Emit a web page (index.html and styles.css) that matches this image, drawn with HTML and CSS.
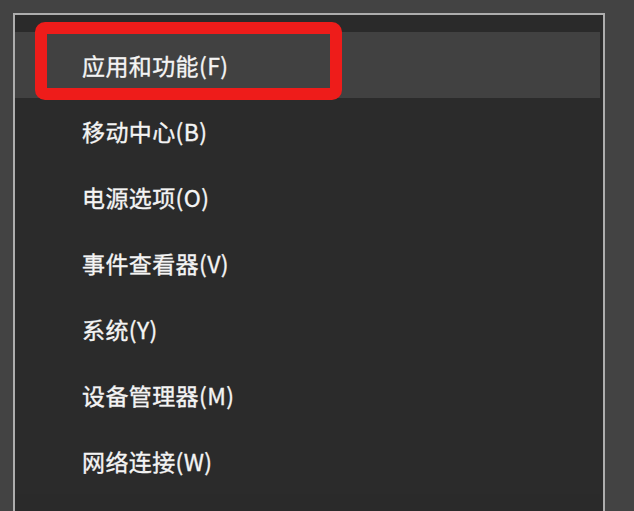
FILE: index.html
```html
<!DOCTYPE html>
<html lang="zh-CN">
<head>
<meta charset="utf-8">
<title>菜单</title>
<link rel="stylesheet" href="styles.css">
</head>
<body>
<div class="stage">
  <div class="panel">
    <ul class="menu">
      <li class="item active">应用和功能(F)</li>
      <li class="item">移动中心(B)</li>
      <li class="item">电源选项(O)</li>
      <li class="item">事件查看器(V)</li>
      <li class="item">系统(Y)</li>
      <li class="item">设备管理器(M)</li>
      <li class="item">网络连接(W)</li>
    </ul>
  </div>
  <div class="mark"></div>
</div>
</body>
</html>
```

FILE: styles.css
```css
html, body {
  margin: 0;
  padding: 0;
  background: #434343;
  overflow: hidden;
}
body {
  font-family: "Noto Sans CJK SC", "Noto Sans", sans-serif;
}
.stage {
  position: relative;
  width: 634px;
  height: 511px;
  padding: 13px 0 0 13px;
  box-sizing: border-box;
  overflow: hidden;
}
.panel {
  width: 592px;
  height: 498px;
  box-sizing: border-box;
  border: 2px solid #adadad;
  border-bottom: 0;
  background: #2a2a2a;
  padding: 17px 3px 0 0;
  overflow: hidden;
}
.menu {
  list-style: none;
  margin: 0;
  padding: 0;
  background: #2b2b2b;
}
.item {
  height: 66px;
  line-height: 66px;
  padding-left: 67px;
  color: #f4f4f4;
  font-size: 23px;
  letter-spacing: 0.4px;
  -webkit-text-stroke: 0.35px #f4f4f4;
}
.item.active {
  background: #414141;
}
.mark {
  position: absolute;
  left: 35px;
  top: 22px;
  width: 307px;
  height: 78px;
  box-sizing: border-box;
  border: 12px solid #ee1c1a;
  border-radius: 10px;
}
```
